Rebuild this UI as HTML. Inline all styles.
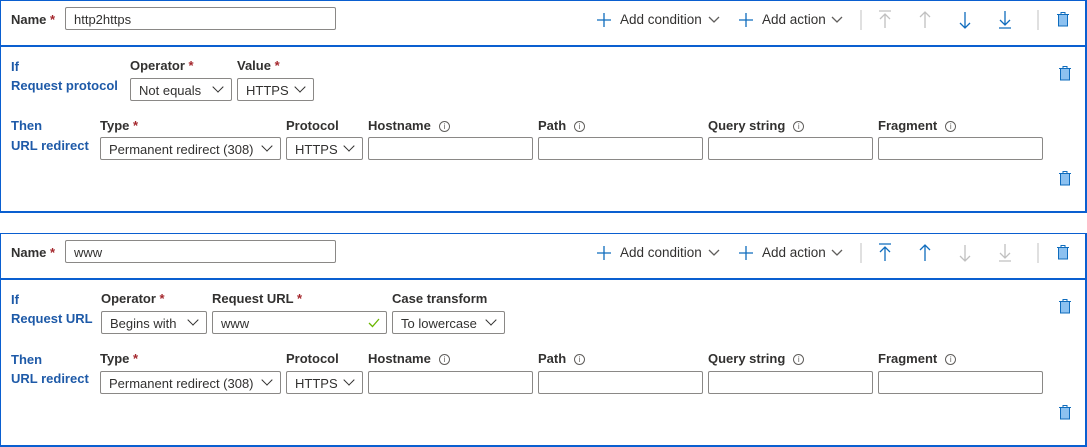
<!DOCTYPE html>
<html><head><meta charset="utf-8"><style>
*{box-sizing:border-box;margin:0;padding:0}
body{width:1087px;height:447px;background:#fff;font-family:"Liberation Sans",sans-serif;font-size:13px;color:#323130;position:relative;overflow:hidden}
.card{position:absolute;left:0;width:1087px;border:2px solid #0a5fd0;border-width:1px 2px 2px 1px}
.card .hl{position:absolute;left:0;right:0;height:2px;background:#0a5fd0;top:44px}
.a{position:absolute;white-space:nowrap}
.lbl{font-weight:bold;color:#323130}
.req{color:#a4262c}
.blue{color:#1e5aa8;font-weight:bold}
.box{position:absolute;border:1px solid #8a8886;border-radius:2px;height:23px;background:#fff;padding:1px 8px 0;line-height:21px;white-space:nowrap}
.sel::after{content:"";position:absolute;right:9px;top:4px;width:7px;height:7px;border-right:1.3px solid #323130;border-bottom:1.3px solid #323130;transform:rotate(45deg)}
.info{display:inline-block;width:11px;height:11px;border:1px solid #605e5c;border-radius:50%;font-size:8px;line-height:9px;text-align:center;color:#605e5c;margin-left:8px;vertical-align:1px;font-weight:normal}
svg{position:absolute}
</style></head><body>

<!-- CARD 1 -->
<div class="card" style="top:0;height:213px"><div class="hl"></div></div>
<div class="a lbl" style="left:11px;top:12px">Name <span class="req">*</span></div>
<div class="box" style="left:65px;top:7px;width:271px">http2https</div>

<div class="a blue" style="left:11px;top:59px">If</div>
<div class="a blue" style="left:11px;top:78px">Request protocol</div>
<div class="a lbl" style="left:130px;top:58px">Operator <span class="req">*</span></div>
<div class="a lbl" style="left:237px;top:58px">Value <span class="req">*</span></div>
<div class="box sel" style="left:130px;top:78px;width:102px">Not equals</div>
<div class="box sel" style="left:237px;top:78px;width:77px">HTTPS</div>

<div class="a blue" style="left:11px;top:118px">Then</div>
<div class="a blue" style="left:11px;top:138px">URL redirect</div>
<div class="a lbl" style="left:100px;top:118px">Type <span class="req">*</span></div>
<div class="a lbl" style="left:286px;top:118px">Protocol</div>
<div class="a lbl" style="left:368px;top:118px">Hostname<span class="info">i</span></div>
<div class="a lbl" style="left:538px;top:118px">Path<span class="info">i</span></div>
<div class="a lbl" style="left:708px;top:118px">Query string<span class="info">i</span></div>
<div class="a lbl" style="left:878px;top:118px">Fragment<span class="info">i</span></div>
<div class="box sel" style="left:100px;top:137px;width:181px">Permanent redirect (308)</div>
<div class="box sel" style="left:286px;top:137px;width:77px">HTTPS</div>
<div class="box" style="left:368px;top:137px;width:165px"></div>
<div class="box" style="left:538px;top:137px;width:165px"></div>
<div class="box" style="left:708px;top:137px;width:165px"></div>
<div class="box" style="left:878px;top:137px;width:165px"></div>

<!-- CARD 2 -->
<div class="card" style="top:233px;height:214px"><div class="hl"></div></div>
<div class="a lbl" style="left:11px;top:245px">Name <span class="req">*</span></div>
<div class="box" style="left:65px;top:240px;width:271px">www</div>

<div class="a blue" style="left:11px;top:292px">If</div>
<div class="a blue" style="left:11px;top:311px">Request URL</div>
<div class="a lbl" style="left:101px;top:291px">Operator <span class="req">*</span></div>
<div class="a lbl" style="left:212px;top:291px">Request URL <span class="req">*</span></div>
<div class="a lbl" style="left:392px;top:291px">Case transform</div>
<div class="box sel" style="left:101px;top:311px;width:106px">Begins with</div>
<div class="box" style="left:212px;top:311px;width:175px">www<svg style="right:6px;top:6px" width="12" height="10" viewBox="0 0 12 10"><path d="M1 5l3.5 3.5L11 1" fill="none" stroke="#6bb700" stroke-width="1.3"/></svg></div>
<div class="box sel" style="left:392px;top:311px;width:113px">To lowercase</div>

<div class="a blue" style="left:11px;top:352px">Then</div>
<div class="a blue" style="left:11px;top:371px">URL redirect</div>
<div class="a lbl" style="left:100px;top:351px">Type <span class="req">*</span></div>
<div class="a lbl" style="left:286px;top:351px">Protocol</div>
<div class="a lbl" style="left:368px;top:351px">Hostname<span class="info">i</span></div>
<div class="a lbl" style="left:538px;top:351px">Path<span class="info">i</span></div>
<div class="a lbl" style="left:708px;top:351px">Query string<span class="info">i</span></div>
<div class="a lbl" style="left:878px;top:351px">Fragment<span class="info">i</span></div>
<div class="box sel" style="left:100px;top:371px;width:181px">Permanent redirect (308)</div>
<div class="box sel" style="left:286px;top:371px;width:77px">HTTPS</div>
<div class="box" style="left:368px;top:371px;width:165px"></div>
<div class="box" style="left:538px;top:371px;width:165px"></div>
<div class="box" style="left:708px;top:371px;width:165px"></div>
<div class="box" style="left:878px;top:371px;width:165px"></div>

<!-- toolbars -->
<div class="a" style="left:620px;top:12px;font-size:13.5px">Add condition</div>
<div class="a" style="left:762px;top:12px;font-size:13.5px">Add action</div>
<div class="a" style="left:620px;top:245px;font-size:13.5px">Add condition</div>
<div class="a" style="left:762px;top:245px;font-size:13.5px">Add action</div>

<svg width="1087" height="447" style="left:0;top:0" fill="none" stroke-width="1.3">
<g>
<path d="M597 20h14M604 13v14M739 20h14M746 13v14" stroke="#0f6cbd"/>
<path d="M709 17l5 5 5-5M832 17l5 5 5-5" stroke="#605e5c"/>
<path d="M861 10v20M1038 10v20" stroke="#d0d0d0"/>
</g>
<g transform="translate(0,233)"><path d="M597 20h14M604 13v14M739 20h14M746 13v14" stroke="#0f6cbd"/>
<path d="M709 17l5 5 5-5M832 17l5 5 5-5" stroke="#605e5c"/>
<path d="M861 10v20M1038 10v20" stroke="#d0d0d0"/></g>
<path d="M879 11h12M885 14v14M880 19l5-5 5 5" stroke="#c0c0c0"/>
<path d="M925 12v16M920 17l5-5 5 5" stroke="#c0c0c0"/>
<path d="M965 12v16M960 23l5 5 5-5" stroke="#0f6cbd"/>
<path d="M1005 11v14M1000 20l5 5 5-5M999 28h12" stroke="#0f6cbd"/>
<path d="M879 244h12M885 247v14M880 252l5-5 5 5" stroke="#0f6cbd"/>
<path d="M925 245v16M920 250l5-5 5 5" stroke="#0f6cbd"/>
<path d="M965 245v16M960 256l5 5 5-5" stroke="#c0c0c0"/>
<path d="M1005 244v14M1000 253l5 5 5-5M999 261h12" stroke="#c0c0c0"/>
</svg>

<svg width="14" height="16" style="left:1056px;top:11px" viewBox="0 0 14 16"><rect x="2.5" y="3.5" width="9" height="11.5" fill="#8cc1f0" stroke="#0f6cbd"/><path d="M1 3.5h12M5 3.5V1.5h4v2" stroke="#0f6cbd" fill="none"/></svg>
<svg width="14" height="16" style="left:1058px;top:65px" viewBox="0 0 14 16"><rect x="2.5" y="3.5" width="9" height="11.5" fill="#8cc1f0" stroke="#0f6cbd"/><path d="M1 3.5h12M5 3.5V1.5h4v2" stroke="#0f6cbd" fill="none"/></svg>
<svg width="14" height="16" style="left:1058px;top:170px" viewBox="0 0 14 16"><rect x="2.5" y="3.5" width="9" height="11.5" fill="#8cc1f0" stroke="#0f6cbd"/><path d="M1 3.5h12M5 3.5V1.5h4v2" stroke="#0f6cbd" fill="none"/></svg>
<svg width="14" height="16" style="left:1056px;top:244px" viewBox="0 0 14 16"><rect x="2.5" y="3.5" width="9" height="11.5" fill="#8cc1f0" stroke="#0f6cbd"/><path d="M1 3.5h12M5 3.5V1.5h4v2" stroke="#0f6cbd" fill="none"/></svg>
<svg width="14" height="16" style="left:1058px;top:298px" viewBox="0 0 14 16"><rect x="2.5" y="3.5" width="9" height="11.5" fill="#8cc1f0" stroke="#0f6cbd"/><path d="M1 3.5h12M5 3.5V1.5h4v2" stroke="#0f6cbd" fill="none"/></svg>
<svg width="14" height="16" style="left:1058px;top:404px" viewBox="0 0 14 16"><rect x="2.5" y="3.5" width="9" height="11.5" fill="#8cc1f0" stroke="#0f6cbd"/><path d="M1 3.5h12M5 3.5V1.5h4v2" stroke="#0f6cbd" fill="none"/></svg>
</body></html>
